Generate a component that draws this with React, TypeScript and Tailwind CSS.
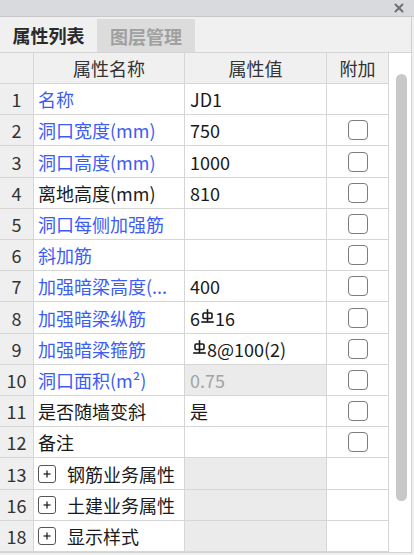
import React from "react";

const BLUE = "text-[#3d5cf5]";

function Rebar() {
  return (
    <svg width="13" height="15" viewBox="0 0 13 15" className="inline-block -mt-[3px] mx-[1px]" aria-hidden>
      <g stroke="#1a1a1a" strokeWidth="1.6" fill="none" strokeLinecap="square">
        <line x1="6.5" y1="1" x2="6.5" y2="12.5" />
        <rect x="2" y="4" width="9" height="5.5" rx="1.2" />
        <line x1="1" y1="13" x2="12" y2="13" />
      </g>
    </svg>
  );
}

type Row = {
  n: string;
  name: React.ReactNode;
  blue?: boolean;
  value?: React.ReactNode;
  check?: boolean;
  grayVal?: boolean;
  group?: boolean;
};

const rows: Row[] = [
  { n: "1", name: "名称", blue: true, value: "JD1" },
  { n: "2", name: "洞口宽度(mm)", blue: true, value: "750", check: true },
  { n: "3", name: "洞口高度(mm)", blue: true, value: "1000", check: true },
  { n: "4", name: "离地高度(mm)", value: "810", check: true },
  { n: "5", name: "洞口每侧加强筋", blue: true, check: true },
  { n: "6", name: "斜加筋", blue: true, check: true },
  { n: "7", name: "加强暗梁高度(...", blue: true, value: "400", check: true },
  {
    n: "8",
    name: "加强暗梁纵筋",
    blue: true,
    value: (
      <span className="flex items-center">
        6<Rebar />16
      </span>
    ),
    check: true,
  },
  {
    n: "9",
    name: "加强暗梁箍筋",
    blue: true,
    value: (
      <span className="flex items-center pl-[2px]">
        <Rebar />8@100(2)
      </span>
    ),
    check: true,
  },
  {
    n: "10",
    name: "洞口面积(m²)",
    blue: true,
    value: <span className="text-[#a3a3a3]">0.75</span>,
    grayVal: true,
    check: true,
  },
  { n: "11", name: "是否随墙变斜", value: "是", check: true },
  { n: "12", name: "备注", check: true },
  { n: "13", name: "钢筋业务属性", group: true, grayVal: true },
  { n: "16", name: "土建业务属性", group: true, grayVal: true },
  { n: "18", name: "显示样式", group: true, grayVal: true },
];

export default function App() {
  return (
    <div
      className="w-[414px] h-[555px] bg-[#f0f0f0] overflow-hidden flex flex-col text-[18px] text-[#1a1a1a]"
      style={{ fontFamily: '"Noto Sans CJK SC", "Noto Sans", sans-serif' }}
    >
      {/* title bar */}
      <div className="h-[17px] shrink-0 bg-[#d9dadd] border-b border-[#c9c9cc] flex items-center justify-end pr-[10px]">
        <svg width="10" height="10" viewBox="0 0 10 10">
          <g stroke="#727272" strokeWidth="2" strokeLinecap="round">
            <line x1="1.5" y1="1.5" x2="8.5" y2="8.5" />
            <line x1="8.5" y1="1.5" x2="1.5" y2="8.5" />
          </g>
        </svg>
      </div>
      {/* tabs */}
      <div className="h-[35px] shrink-0 flex items-stretch">
        <div className="w-[97px] flex items-center justify-center font-bold text-[#2a2a2a] leading-none">
          属性列表
        </div>
        <div className="w-[98px] mt-[2px] bg-[#dcdcdc] flex items-center justify-center text-[#a0a0a0] font-bold leading-none">
          图层管理
        </div>
        <div className="flex-1 border-r border-[#cfcfcf] mr-[2px]" />
      </div>
      {/* table */}
      <div className="flex h-[501px] mr-[2px] border-t border-b border-r border-[#d4d4d4]">
        <div className="w-[389px] flex flex-col">
          {/* header */}
          <div className="h-[31px] shrink-0 flex bg-[#f0f0f0] text-[#333] leading-none">
            <div className="w-[34px] border-r border-b border-[#d6d6d6]" />
            <div className="w-[151px] border-r border-b border-[#d6d6d6] flex items-center justify-center">
              属性名称
            </div>
            <div className="w-[142px] border-r border-b border-[#d6d6d6] flex items-center justify-center">
              属性值
            </div>
            <div className="w-[62px] border-r border-b border-[#d6d6d6] flex items-center justify-center">
              附加
            </div>
          </div>
          {/* body */}
          <div className="flex-1 flex flex-col">
            {rows.map((r) => (
              <div key={r.n} className="flex-1 flex leading-none">
                <div className="w-[34px] bg-[#efefef] border-r border-b border-[#d6d6d6] flex items-center justify-center text-[#333]">
                  {r.n}
                </div>
                <div
                  className={`w-[151px] bg-white border-r border-b border-[#d6d6d6] flex items-center pl-[4px] whitespace-nowrap ${
                    r.blue ? BLUE : ""
                  }`}
                >
                  {r.group ? (
                    <>
                      <span className="w-[18px] h-[18px] rounded-[3px] border border-[#555] flex items-center justify-center mr-[11px] shrink-0">
                        <svg width="8" height="8" viewBox="0 0 8 8">
                          <g stroke="#222" strokeWidth="1.3">
                            <line x1="4" y1="0.5" x2="4" y2="7.5" />
                            <line x1="0.5" y1="4" x2="7.5" y2="4" />
                          </g>
                        </svg>
                      </span>
                      {r.name}
                    </>
                  ) : (
                    r.name
                  )}
                </div>
                <div
                  className={`w-[142px] border-r border-b border-[#d6d6d6] flex items-center pl-[5px] whitespace-nowrap ${
                    r.grayVal ? "bg-[#ebebeb]" : "bg-white"
                  }`}
                >
                  {r.value}
                </div>
                <div className="w-[62px] bg-white border-r border-b border-[#d6d6d6] flex items-center justify-center">
                  {r.check && (
                    <span className="w-[20px] h-[20px] rounded-[4px] border-[1.5px] border-[#7c7c7c] bg-white" />
                  )}
                </div>
              </div>
            ))}
          </div>
        </div>
        {/* scrollbar */}
        <div className="flex-1 bg-white pt-[21px] pl-[7px]">
          <div className="w-[11px] h-[427px] rounded-full bg-[#c8c8c8]" />
        </div>
      </div>
    </div>
  );
}
